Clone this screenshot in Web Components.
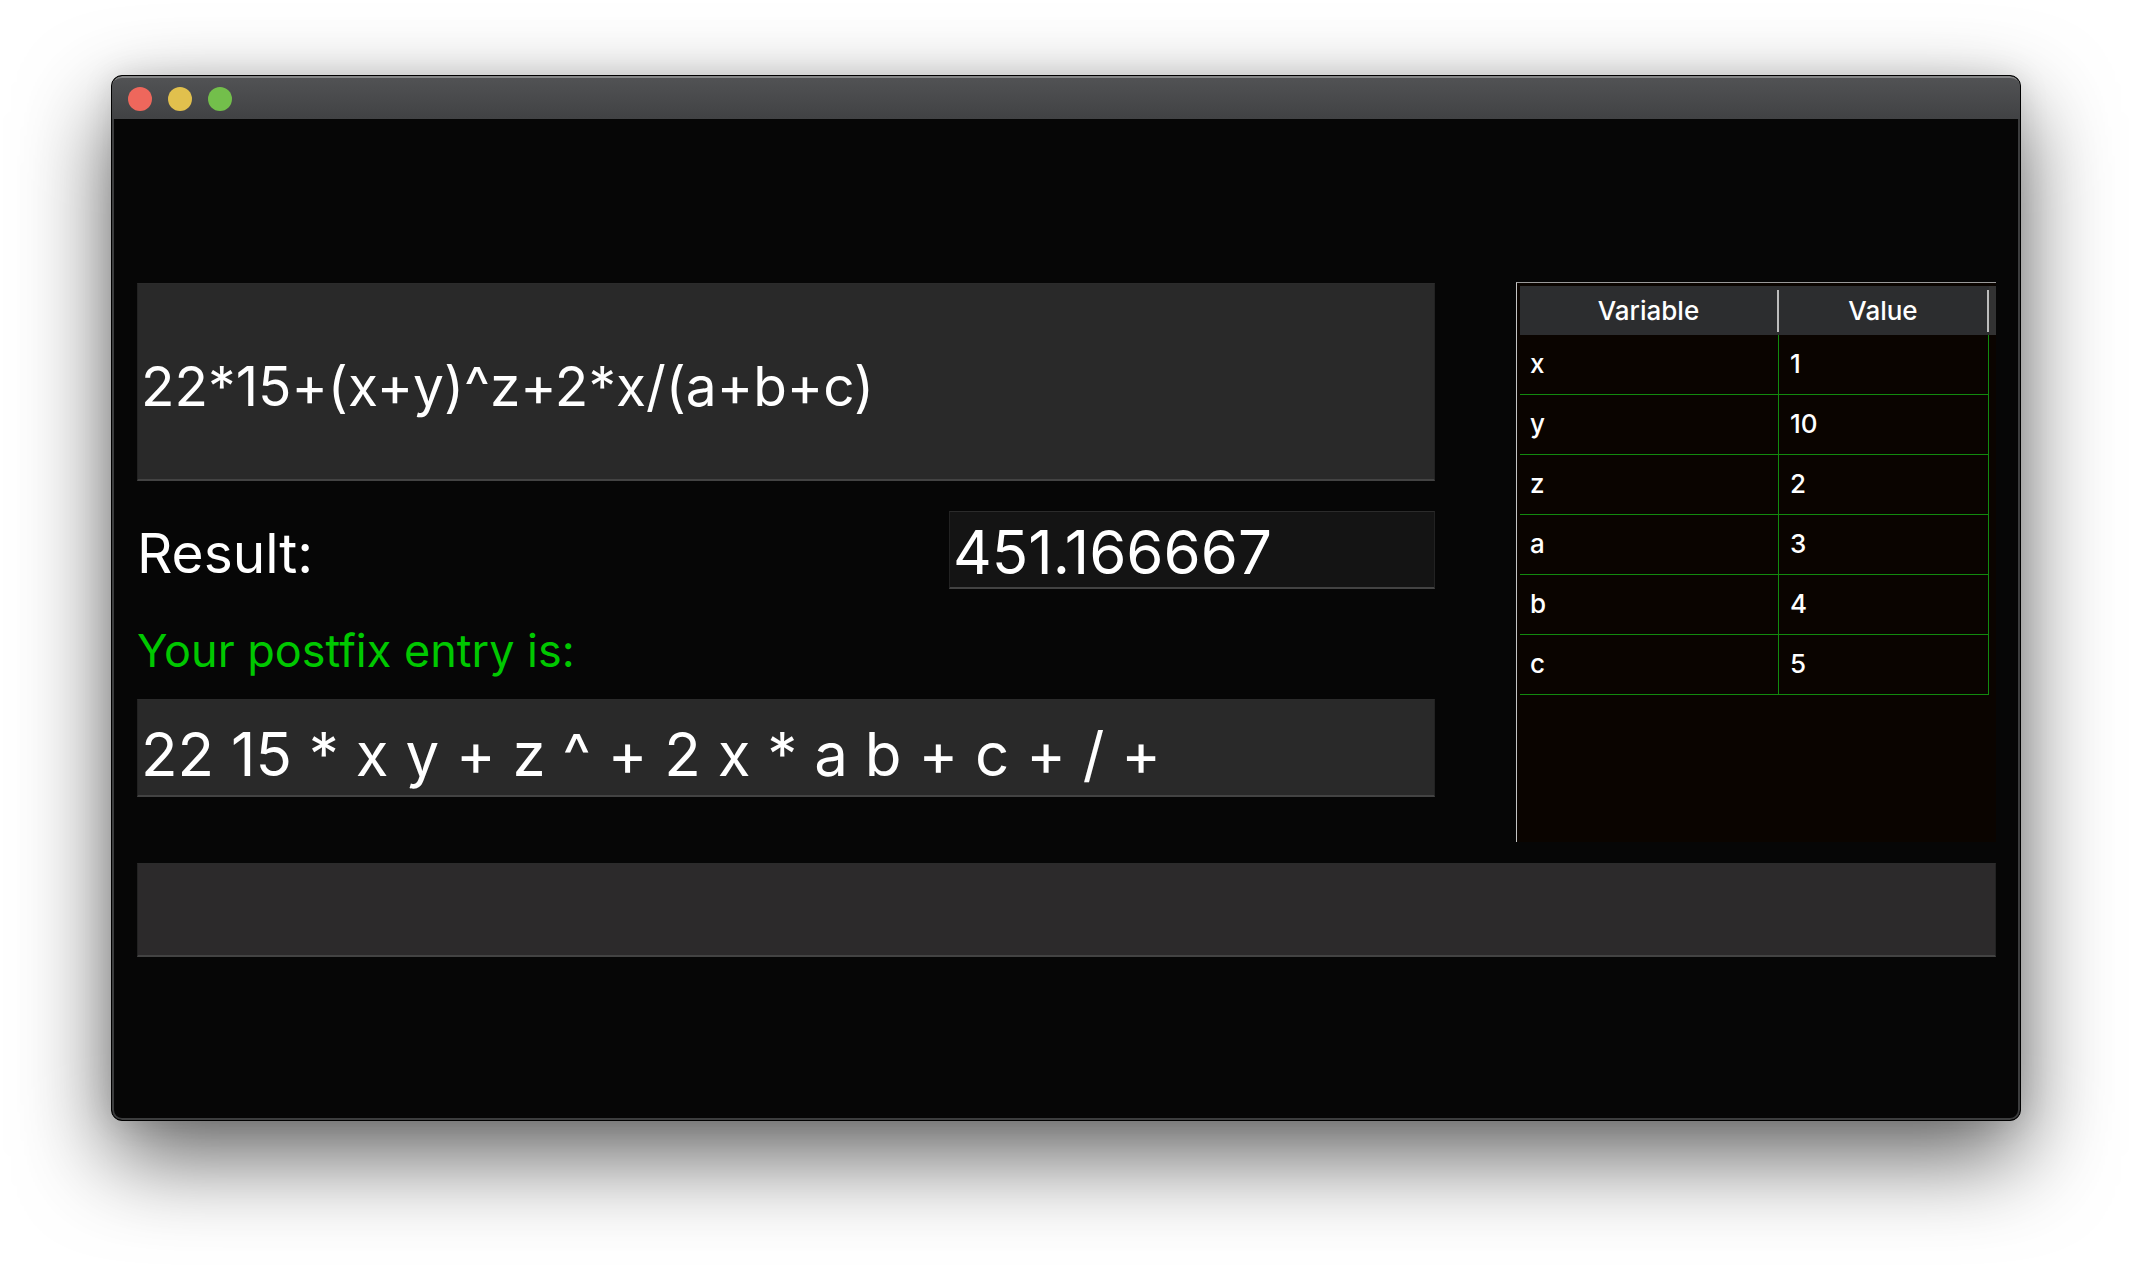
<!DOCTYPE html>
<html lang="en">
<head>
<meta charset="utf-8">
<title>Postfix calculator</title>
<style>
body { margin: 0; background: #fff; font-family: Inter, "Liberation Sans", sans-serif; font-feature-settings: "calt" 0; color: #fff; }
</style>
</head>
<body>
<calc-window>
  <calc-app></calc-app>
</calc-window>
<script>
class BaseElement extends HTMLElement {
  constructor() {
    super();
    this.attachShadow({ mode: "open" });
  }
  connectedCallback() {
    this.shadowRoot.innerHTML = this.render();
  }
}

class CalcWindow extends BaseElement {
  render() {
    return `
      <style>
        :host { display: block; padding: 75px 111px 147px; }
        .frame {
          border: 1px solid #000; border-radius: 11px; overflow: hidden; background: #060606;
          box-shadow: 0 36px 90px rgba(0,0,0,.62), 0 0 30px rgba(0,0,0,.1);
        }
        .inner { border: 2px solid #3c3d3e; border-top: 0; border-radius: 0 0 10px 10px; }
        header {
          display: flex; align-items: center; gap: 16px; height: 43px; box-sizing: border-box;
          margin: 0 -2px; padding: 0 16px; border-top: 2px solid #858687;
          border-radius: 10px 10px 0 0;
          background: linear-gradient(#515254, #414244);
        }
        button { width: 24px; height: 24px; padding: 0; border: 0; border-radius: 50%; }
        .close { background: #ee675c; }
        .min { background: #e1c04d; }
        .max { background: #73bf4b; }
      </style>
      <div class="frame"><div class="inner">
        <header>
          <button class="close" aria-label="Close"></button>
          <button class="min" aria-label="Minimize"></button>
          <button class="max" aria-label="Zoom"></button>
        </header>
        <slot></slot>
      </div></div>`;
  }
}

/* A text box; "caption" adds a visible label, "label" names the box without drawing one. */
class CalcField extends BaseElement {
  render() {
    const value = this.getAttribute("value") || "";
    const label = this.getAttribute("label");
    const caption = this.getAttribute("caption");
    return `
      <style>
        :host { display: flex; flex-direction: column; }
        :host([inline]) { flex-direction: row; align-items: center; justify-content: space-between; }
        label { color: var(--caption-color, #fff); font-size: var(--caption-size, 55px); line-height: 60px; }
        :host(:not([inline])) label { margin-bottom: 18px; }
        :host([inline]) label { padding-top: 6px; }
        input {
          display: block; width: var(--field-width, 100%); height: var(--field-height, 98px); box-sizing: border-box; margin: 0;
          padding: var(--field-inset, 8px) 3px 0; border: 1px solid #222; border-top-color: #2b2b2b; border-bottom: 2px solid #434343; border-radius: 0;
          background: var(--field-background, #292929); color: #fff; outline: 0;
          font: inherit; font-feature-settings: inherit; font-size: var(--field-size, 60px);
        }
      </style>
      ${caption ? `<label for="box">${caption}</label>` : ""}
      <input id="box" type="text" ${label ? `aria-label="${label}"` : ""} value="${value}">`;
  }
}

class VariableTable extends BaseElement {
  render() {
    const rows = [["x", 1], ["y", 10], ["z", 2], ["a", 3], ["b", 4], ["c", 5]];
    return `
      <style>
        :host {
          display: block; box-sizing: border-box; height: 560px; padding: 3px 0 0 3px;
          border-top: 1px solid #9a9a9a; border-left: 1px solid #c4c4c4; background: #0a0400;
        }
        table { width: 100%; border-collapse: separate; border-spacing: 0; table-layout: fixed; }
        th, td { box-sizing: border-box; padding: 0; font-size: 26px; font-weight: 500; text-align: left; }
        th { height: 49px; background: #2c2d2f; line-height: 42px; text-align: center; }
        th span { display: block; border-right: 2px solid #bdbdbd; }
        th:last-child { background: #323232; }
        td { height: 60px; padding: 0 10px 2px; border-right: 1px solid #128a0e; border-bottom: 1px solid #128a0e; }
        td:nth-child(2) { padding-left: 11px; }
        td:last-child { padding: 0; border: 0; }
        .variable { width: 259px; }
        .rest { width: 7px; }
      </style>
      <table>
        <colgroup><col class="variable"><col><col class="rest"></colgroup>
        <thead><tr><th><span>Variable</span></th><th><span>Value</span></th><th></th></tr></thead>
        <tbody>${rows.map(([n, v]) => `<tr><td>${n}</td><td>${v}</td><td></td></tr>`).join("")}</tbody>
      </table>`;
  }
}

class CalcApp extends BaseElement {
  render() {
    return `
      <style>
        :host { display: block; padding: 163px 22px 161px 23px; }
        .top { display: flex; gap: 81px; margin-bottom: 21px; }
        .left { flex: 1; min-width: 0; padding-top: 1px; }
        .expression { --field-height: 198px; --field-size: 55px; }
        .result { margin: 30px 0 32px; --field-width: 486px; --field-height: 78px; --field-inset: 4px; --field-background: #141414; }
        .postfix { --field-inset: 12px; --caption-size: 45px; --caption-color: #00c800; }
        .message { --field-height: 94px; --field-background: #2c2a2b; }
        variable-table { width: 480px; flex: none; }
      </style>
      <div class="top">
        <div class="left">
          <calc-field class="expression" label="Expression" value="22*15+(x+y)^z+2*x/(a+b+c)"></calc-field>
          <calc-field class="result" inline caption="Result:" value="451.166667"></calc-field>
          <calc-field class="postfix" caption="Your postfix entry is:" value="22 15 * x y + z ^ + 2 x * a b + c + / +"></calc-field>
        </div>
        <variable-table></variable-table>
      </div>
      <calc-field class="message" label="Message"></calc-field>`;
  }
}

customElements.define("calc-window", CalcWindow);
customElements.define("calc-field", CalcField);
customElements.define("variable-table", VariableTable);
customElements.define("calc-app", CalcApp);
</script>
</body>
</html>
